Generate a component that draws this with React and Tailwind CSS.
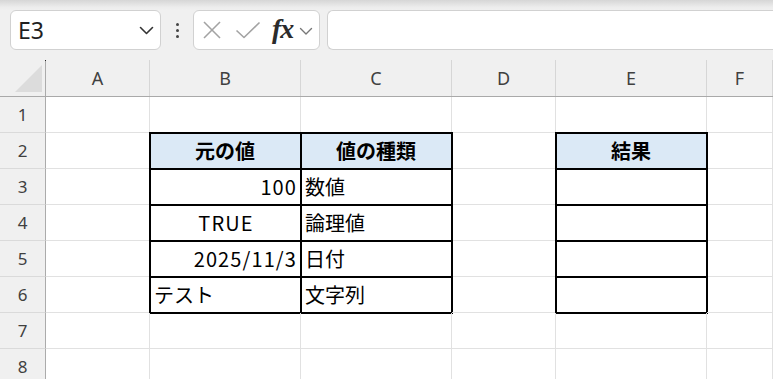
import React from "react";

const CJK = { fontFamily: '"Noto Sans CJK JP", "Noto Sans", sans-serif' };
const UI = { fontFamily: '"Noto Sans", "Open Sans", sans-serif' };

function Chevron({ className }) {
  return (
    <svg className={className} width="15" height="9" viewBox="0 0 15 9" fill="none">
      <polyline points="1.5,1.5 7.5,7.5 13.5,1.5" stroke="#333" strokeWidth="1.6" strokeLinecap="round" strokeLinejoin="round" />
    </svg>
  );
}

function Toolbar() {
  return (
    <div className="h-[60px] shrink-0 bg-[linear-gradient(to_bottom,#d6d6d6_0px,#ececec_7px,#f0f0f0_10px)] flex items-start pt-[10px] pl-[10px]">
      <div className="w-[151px] h-[40px] bg-white border border-[#d1d1d1] rounded-[6px] flex items-center pl-[7px] pr-[6px]">
        <span className="text-[23px] text-[#1f1f1f] leading-none flex-1" style={UI}>E3</span>
        <Chevron />
      </div>
      <div className="w-[32px] h-[40px] flex flex-col items-center justify-center gap-[3px]">
        <span className="w-[3px] h-[3px] rounded-full bg-[#444]" />
        <span className="w-[3px] h-[3px] rounded-full bg-[#444]" />
        <span className="w-[3px] h-[3px] rounded-full bg-[#444]" />
      </div>
      <div className="w-[127px] h-[40px] bg-white border border-[#d1d1d1] rounded-[6px] flex items-center pl-[8px]">
        <svg width="20" height="18" viewBox="0 0 20 18" fill="none">
          <line x1="2" y1="1" x2="18" y2="17" stroke="#a3a3a3" strokeWidth="1.6" />
          <line x1="18" y1="1" x2="2" y2="17" stroke="#a3a3a3" strokeWidth="1.6" />
        </svg>
        <svg className="ml-[13px]" width="26" height="18" viewBox="0 0 26 18" fill="none">
          <polyline points="1.5,9.5 9,16.5 24.5,1.5" stroke="#a3a3a3" strokeWidth="1.6" strokeLinejoin="round" />
        </svg>
        <span
          className="ml-[11px] text-[28px] italic font-semibold text-[#2b2b2b] leading-none -mt-[3px] tracking-[-1px]"
          style={{ fontFamily: '"Liberation Serif", "DejaVu Serif", serif' }}
        >
          fx
        </span>
        <svg className="ml-[6px] mt-[2px]" width="14" height="9" viewBox="0 0 14 9" fill="none">
          <polyline points="1.5,1.5 7,7 12.5,1.5" stroke="#777" strokeWidth="1.4" strokeLinecap="round" strokeLinejoin="round" />
        </svg>
      </div>
      <div className="ml-[7px] flex-1 h-[40px] bg-white border border-r-0 border-[#d1d1d1] rounded-l-[6px]" />
    </div>
  );
}

const COLS = ["A", "B", "C", "D", "E", "F"];
const COLW = ["w-[104px]", "w-[151px]", "w-[151px]", "w-[104px]", "w-[151px]", "flex-1"];

const DATA = {
  2: {
    B: { t: "元の値", head: true },
    C: { t: "値の種類", head: true },
    E: { t: "結果", head: true },
  },
  3: { B: { t: "100", a: "r", lat: true }, C: { t: "数値", a: "l" }, E: { t: "" } },
  4: { B: { t: "TRUE", a: "c", lat: true }, C: { t: "論理値", a: "l" }, E: { t: "" } },
  5: { B: { t: "2025/11/3", a: "r", lat: true }, C: { t: "日付", a: "l" }, E: { t: "" } },
  6: { B: { t: "テスト", a: "l" }, C: { t: "文字列", a: "l" }, E: { t: "" } },
};

function Cell({ w, d }) {
  let cls = `${w} shrink-0 h-[36px] border-r border-b border-[#e1e1e1] flex items-center text-[20px] text-black whitespace-nowrap overflow-visible`;
  if (d) {
    if (d.head) cls += " bg-[#dbe9f6] justify-center font-bold";
    else if (d.a === "r") cls += " justify-end pr-[3px]";
    else if (d.a === "c") cls += " justify-center pl-[2px]";
    else cls += " justify-start pl-[4px]";
    if (d.lat) cls += " tracking-[1.1px]";
    cls += " outline-2 outline-black -outline-offset-1";
  }
  return (
    <div className={cls} style={CJK}>
      {d ? d.t : null}
    </div>
  );
}

function Row({ n }) {
  const rd = DATA[n] || {};
  return (
    <div className="flex">
      <div className="w-[46px] shrink-0 h-[36px] bg-[#f0f0f0] border-r border-r-[#ababab] border-b border-b-[#dadada] flex items-center justify-center text-[17px] text-[#404040]" style={UI}>
        {n}
      </div>
      {COLS.map((c, i) => (
        <Cell key={c} w={COLW[i]} d={rd[c]} />
      ))}
    </div>
  );
}

export default function App() {
  return (
    <div className="w-[773px] h-[379px] overflow-hidden bg-white flex flex-col">
      <Toolbar />
      <div className="flex h-[37px] shrink-0 bg-[#f0f0f0] border-b border-[#a9a9a9]">
        <div className="relative w-[46px] shrink-0 border-r border-[#ababab]">
          <span className="absolute right-[-1px] top-0 w-[1px] h-[1px] bg-[#222]" />
          <svg className="absolute left-[15px] top-[5px]" width="28" height="28" viewBox="0 0 28 28">
            <polygon points="0,27 27,27 27,0" fill="#dcdcdc" />
          </svg>
        </div>
        {COLS.map((c, i) => (
          <div
            key={c}
            className={`${COLW[i]} shrink-0 border-r border-[#d6d6d6] flex items-center justify-center text-[18px] text-[#404040]`}
            style={UI}
          >
            {c}
          </div>
        ))}
      </div>
      {[1, 2, 3, 4, 5, 6, 7, 8].map((n) => (
        <Row key={n} n={n} />
      ))}
    </div>
  );
}
